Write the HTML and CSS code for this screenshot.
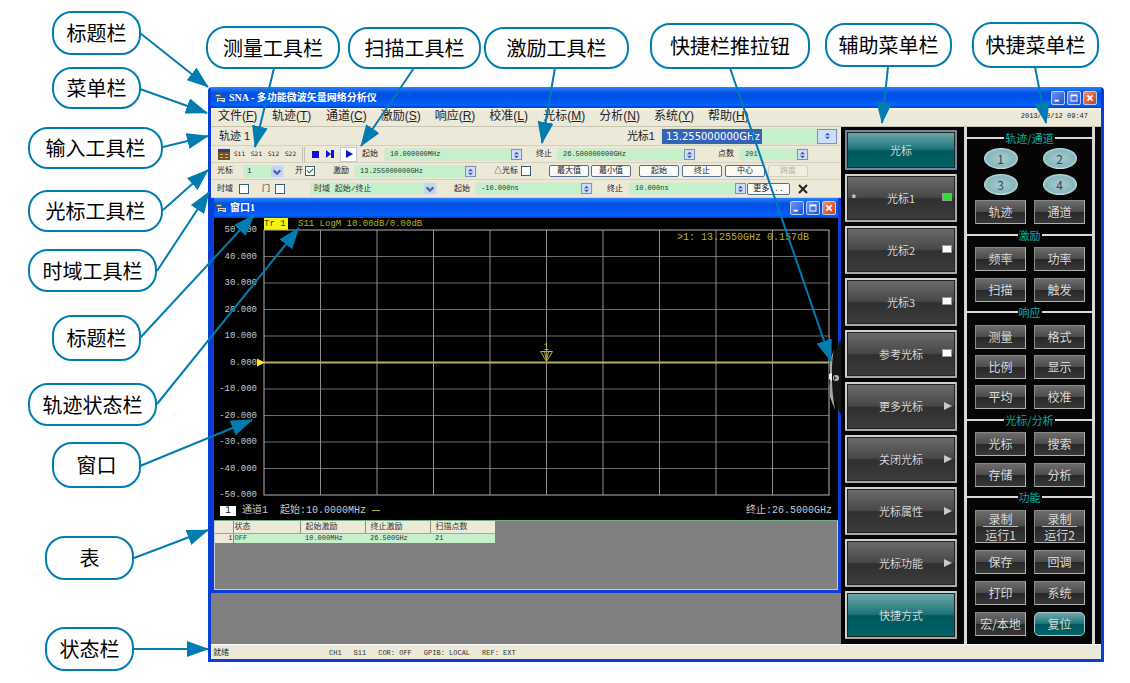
FILE: index.html
```html
<!DOCTYPE html>
<html lang="zh-CN">
<head>
<meta charset="utf-8">
<title>SNA - 多功能微波矢量网络分析仪</title>
<link rel="stylesheet" href="styles.css">
</head>
<body>
<svg class="defs" width="0" height="0" aria-hidden="true">
  <defs>
    <symbol id="app-icon" viewBox="0 0 10 10"><path d="M0 1h6v3H0z" fill="#5a6a5a"/><path d="M1 2h4v1H1z" fill="#d8e0b0"/><path d="M2 5h8v4H2z" fill="#d8d4b8"/><path d="M3 6h6v1H3zM3 8h4v1H3z" fill="#556"/></symbol>
    <symbol id="min" viewBox="0 0 14 14"><path d="M3 9h5v2H3z" fill="#fff"/></symbol>
    <symbol id="max" viewBox="0 0 14 14"><path d="M3 3h8v8H3zM4 5v5h6V5z" fill="#fff" fill-rule="evenodd"/></symbol>
    <symbol id="close" viewBox="0 0 14 14"><path d="M4 4l6 6M10 4l-6 6" stroke="#fff" stroke-width="2"/></symbol>
    <symbol id="spin" viewBox="0 0 10 12"><path d="M5 2L8 5H2zM5 10L2 7h6z" fill="#3c5aa8"/></symbol>
    <symbol id="drop" viewBox="0 0 10 10"><path d="M2 4l3 3 3-3" fill="none" stroke="#4c6490" stroke-width="2"/></symbol>
  </defs>
</svg>
<main class="figure">
  <section class="app">
    <header class="titlebar">
      <svg class="ticon"><use href="#app-icon"/></svg>
      <h1>SNA - 多功能微波矢量网络分析仪</h1>
      <div class="winbtns">
        <button aria-label="最小化"><svg><use href="#min"/></svg></button><button aria-label="最大化"><svg><use href="#max"/></svg></button><button class="x" aria-label="关闭"><svg><use href="#close"/></svg></button>
      </div>
    </header>
    <nav class="menubar">
      <button>文件(<u>F</u>)</button><button>轨迹(<u>T</u>)</button><button>通道(<u>C</u>)</button><button>激励(<u>S</u>)</button><button>响应(<u>R</u>)</button><button>校准(<u>L</u>)</button><button>光标(<u>M</u>)</button><button>分析(<u>N</u>)</button><button>系统(<u>Y</u>)</button><button>帮助(<u>H</u>)</button>
      <time>2013/10/12 09:47</time>
    </nav>
    <div class="content">
      <div class="left">
        <div class="row entry">
          <span class="trace-name">轨迹 1</span>
          <label for="entry">光标1</label>
          <span class="field big"><input id="entry" value="13.255000000GHz"><button class="spin" aria-label="调节"><svg><use href="#spin"/></svg></button></span>
        </div>
        <div class="row tools sweep">
          <button class="bare" aria-label="测量设置"><svg width="12" height="11" viewBox="0 0 12 11"><path d="M0 0h12v11H0z" fill="#70502c"/><path d="M0 0h12v3H0z" fill="#28407c"/><path d="M2 5h3v1H2zM7 5h3v1H7zM2 8h3v1H2zM7 8h3v1H7z" fill="#e8b840"/></svg></button>
          <button class="bare sp">S11</button><button class="bare sp">S21</button><button class="bare sp">S12</button><button class="bare sp">S22</button>
          <span class="grip"></span>
          <button class="bare" aria-label="停止"><svg width="14" height="12" viewBox="0 0 14 12"><path d="M3 3h7v7H3z" fill="#1010d8"/></svg></button>
          <button class="bare" aria-label="单次"><svg width="14" height="12" viewBox="0 0 14 12"><path d="M3 2l5 4V2h3v8H8V6l-5 4z" fill="#1010d8"/></svg></button>
          <button class="bare play" aria-label="连续"><svg width="14" height="12" viewBox="0 0 14 12"><path d="M4 2l7 4-7 4z" fill="#1010d8"/></svg></button>
          <label for="s1">起始</label>
          <span class="field w139"><input id="s1" value="10.000000MHz"><button class="spin" aria-label="调节"><svg><use href="#spin"/></svg></button></span>
          <label for="s2">终止</label>
          <span class="field w139"><input id="s2" value="26.500000000GHz"><button class="spin" aria-label="调节"><svg><use href="#spin"/></svg></button></span>
          <label for="s3">点数</label>
          <span class="field w70"><input id="s3" value="201"><button class="spin" aria-label="调节"><svg><use href="#spin"/></svg></button></span>
        </div>
        <div class="row tools cursor">
          <label for="c1">光标</label>
          <span class="field w41"><select id="c1"><option>1</option></select><svg class="drop"><use href="#drop"/></svg></span>
          <label for="c2">开</label><input type="checkbox" id="c2" checked>
          <label for="c3">激励</label>
          <span class="field w123"><input id="c3" value="13.255000000GHz"><button class="spin" aria-label="调节"><svg><use href="#spin"/></svg></button></span>
          <label for="c4">△光标</label><input type="checkbox" id="c4">
          <button class="xp">最大值</button><button class="xp">最小值</button><button class="xp">起始</button><button class="xp">终止</button><button class="xp">中心</button><button class="xp" disabled>跨度</button>
        </div>
        <div class="row tools domain">
          <label for="d1">时域</label><input type="checkbox" id="d1">
          <label for="d2">门</label><input type="checkbox" id="d2">
          <span class="field w127"><select id="d3" aria-label="时域方式"><option>时域 起始/终止</option></select><svg class="drop"><use href="#drop"/></svg></span>
          <label for="d4">起始</label>
          <span class="field w118"><input id="d4" value="-10.000ns"><button class="spin" aria-label="调节"><svg><use href="#spin"/></svg></button></span>
          <label for="d5">终止</label>
          <span class="field w118"><input id="d5" value="10.000ns"><button class="spin" aria-label="调节"><svg><use href="#spin"/></svg></button></span>
          <button class="xp more">更多...</button>
          <button class="bare" aria-label="关闭工具栏"><svg width="14" height="12" viewBox="0 0 14 12"><path d="M3 2l8 8M11 2l-8 8" stroke="#222" stroke-width="2"/></svg></button>
        </div>
        <section class="child">
          <header class="titlebar sub">
            <svg class="ticon"><use href="#app-icon"/></svg>
            <h2>窗口1</h2>
            <div class="winbtns">
              <button aria-label="最小化"><svg><use href="#min"/></svg></button><button aria-label="最大化"><svg><use href="#max"/></svg></button><button class="x" aria-label="关闭"><svg><use href="#close"/></svg></button>
            </div>
          </header>
          <div class="plot">
            <div class="trace"><span class="tag">Tr 1</span><span>S11 LogM 10.00dB/0.00dB</span></div>
            <div class="graph">
              <div class="axis"><span>50.000</span><span>40.000</span><span>30.000</span><span>20.000</span><span>10.000</span><span>0.000</span><span>-10.000</span><span>-20.000</span><span>-30.000</span><span>-40.000</span><span>-50.000</span></div>
              <div class="chart">
                <svg class="grid" width="100%" height="100%">
                  <g stroke="#6c6c6c">
                    <line x1="0" x2="100%" y1="10%" y2="10%"/><line x1="0" x2="100%" y1="20%" y2="20%"/><line x1="0" x2="100%" y1="30%" y2="30%"/><line x1="0" x2="100%" y1="40%" y2="40%"/><line x1="0" x2="100%" y1="60%" y2="60%"/><line x1="0" x2="100%" y1="70%" y2="70%"/><line x1="0" x2="100%" y1="80%" y2="80%"/><line x1="0" x2="100%" y1="90%" y2="90%"/>
                  </g>
                  <g stroke="#8c8c8c">
                    <line y1="0" y2="100%" x1="10%" x2="10%"/><line y1="0" y2="100%" x1="20%" x2="20%"/><line y1="0" y2="100%" x1="30%" x2="30%"/><line y1="0" y2="100%" x1="40%" x2="40%"/><line y1="0" y2="100%" x1="50%" x2="50%"/><line y1="0" y2="100%" x1="60%" x2="60%"/><line y1="0" y2="100%" x1="70%" x2="70%"/><line y1="0" y2="100%" x1="80%" x2="80%"/><line y1="0" y2="100%" x1="90%" x2="90%"/>
                  </g>
                  <rect width="100%" height="100%" fill="none" stroke="#b4b4b4"/>
                  <line x1="0" x2="100%" y1="50%" y2="50%" stroke="#b4b060" stroke-width="2"/>
                  <svg x="0" y="50%" overflow="visible"><path d="M-7-4L1 0l-8 4z" fill="#f0f020"/></svg>
                  <svg x="50%" y="50%" overflow="visible"><path d="M-6-11H6L0-1zM-2-11L0-2l2-9M0-13v-6l-2 1M-2-13h4" fill="none" stroke="#b8b820"/></svg>
                </svg>
                <p class="readout">&gt;1: 13.2550GHz 0.157dB</p>
              </div>
            </div>
            <div class="foot"><span class="num">1</span><span>通道1</span><span>起始:10.0000MHz</span><i></i><span class="stop">终止:26.5000GHz</span></div>
          </div>
          <div class="tablearea">
            <table>
              <thead><tr><th></th><th>状态</th><th>起始激励</th><th>终止激励</th><th>扫描点数</th></tr></thead>
              <tbody><tr><th>1</th><td>OFF</td><td>10.000MHz</td><td>26.500GHz</td><td>21</td></tr></tbody>
            </table>
          </div>
        </section>
        <button class="pull" aria-label="快捷栏推拉钮"><svg width="12" height="76" viewBox="0 0 12 76"><path d="M12 0C5 14 0 26 0 38s5 24 12 38z" fill="#151515"/><path d="M5 10L1 22v36l5 13c-2-14-3-20-3-33S3 22 5 10z" fill="#aaa6a2"/><path d="M0 35l3-1v8l-3-2z" fill="#eee"/><circle cx="7" cy="39" r="3" fill="#bbb"/><path d="M5 37l3 2-3 2z" fill="#333"/></svg></button>
      </div>
      <aside class="soft">
        <button class="teal head">光标</button>
        <button><b>*</b>光标1<i class="led on"></i></button>
        <button>光标2<i class="led"></i></button>
        <button>光标3<i class="led"></i></button>
        <button>参考光标<i class="led"></i></button>
        <button>更多光标<i class="arr"></i></button>
        <button>关闭光标<i class="arr"></i></button>
        <button>光标属性<i class="arr"></i></button>
        <button>光标功能<i class="arr"></i></button>
        <button class="teal">快捷方式</button>
      </aside>
      <aside class="short">
        <section class="g1"><h3>轨迹/通道</h3><div><button class="oval">1</button><button class="oval">2</button><button class="oval">3</button><button class="oval">4</button><button>轨迹</button><button>通道</button></div></section>
        <section class="g2"><h3>激励</h3><div><button>频率</button><button>功率</button><button>扫描</button><button>触发</button></div></section>
        <section class="g3"><h3>响应</h3><div><button>测量</button><button>格式</button><button>比例</button><button>显示</button><button>平均</button><button>校准</button></div></section>
        <section class="g4"><h3>光标/分析</h3><div><button>光标</button><button>搜索</button><button>存储</button><button>分析</button></div></section>
        <section class="g5"><h3>功能</h3><div><button class="two"><span>录制</span><span>运行1</span></button><button class="two"><span>录制</span><span>运行2</span></button><button>保存</button><button>回调</button><button>打印</button><button>系统</button><button>宏/本地</button><button class="teal reset">复位</button></div></section>
      </aside>
    </div>
    <footer class="status"><span class="ready">就绪</span><span>CH1</span><span>S11</span><span>COR: OFF</span><span>GPIB: LOCAL</span><span>REF: EXT</span></footer>
  </section>

  <svg class="arrows" width="1130" height="683" viewBox="0 0 1130 683" aria-hidden="true">
    <defs><marker id="tip" markerUnits="userSpaceOnUse" markerWidth="22" markerHeight="16" refX="21" refY="8" orient="auto"><path d="M0 0l22 8-22 8z" fill="#007cb0"/></marker></defs>
    <g stroke="#007cb0" stroke-width="2" marker-end="url(#tip)">
      <path d="M140 33L208 87"/><path d="M140 89L207 113"/><path d="M163 147L208 136"/><path d="M163 210L208 170"/><path d="M157 271L209 192"/><path d="M140 338L254 215"/><path d="M157 404L299 228"/><path d="M140 466L252 420"/><path d="M134 558L208 530"/><path d="M134 649L208 649"/><path d="M274 68L255 147"/><path d="M414 68L361 146"/><path d="M555 68L542 143"/><path d="M730 68L831 361"/><path d="M888 67L882 123"/><path d="M1035 67L1046 123"/>
    </g>
  </svg>
  <span class="note n1">标题栏</span>
  <span class="note n2">菜单栏</span>
  <span class="note n3">输入工具栏</span>
  <span class="note n4">光标工具栏</span>
  <span class="note n5">时域工具栏</span>
  <span class="note n6">标题栏</span>
  <span class="note n7">轨迹状态栏</span>
  <span class="note n8">窗口</span>
  <span class="note n9">表</span>
  <span class="note n10">状态栏</span>
  <span class="note n11">测量工具栏</span>
  <span class="note n12">扫描工具栏</span>
  <span class="note n13">激励工具栏</span>
  <span class="note n14">快捷栏推拉钮</span>
  <span class="note n15">辅助菜单栏</span>
  <span class="note n16">快捷菜单栏</span>
</main>
</body>
</html>
```

FILE: styles.css
```css
* { box-sizing: border-box; }
body { margin: 0; background: #fff; font-family: "Liberation Sans", "Noto Sans CJK SC", sans-serif; }
h1, h2, h3, p { margin: 0; font-weight: normal; }
button, input, select { font: inherit; color: inherit; margin: 0; padding: 0; border: 0; background: none; border-radius: 0; }
button { white-space: nowrap; }
svg { display: block; }
.defs { position: absolute; }

.figure { position: relative; min-width: 1130px; padding: 87px 26px 21px 208px; }

/* main window */
.app { display: flex; flex-direction: column; min-height: 575px; border: solid #0a3fd6; border-width: 0 3px 3px; border-radius: 4px 4px 0 0; background: #ece9d8; overflow: hidden; }
.titlebar { display: flex; align-items: center; gap: 4px; height: 21px; padding: 0 4px; background: linear-gradient(#2a84f8, #0050e4 30%, #0055ee 60%, #0462ff 85%, #0040c8); color: #fff; }
.titlebar h1, .titlebar h2 { flex: 1; font: bold 10px/14px "Liberation Serif", "Noto Sans CJK SC", serif; }
.ticon { width: 10px; height: 10px; }
.winbtns { display: flex; gap: 2px; }
.winbtns button { width: 14px; height: 14px; border: 1px solid #b8ccf8; border-radius: 2px; background: linear-gradient(135deg, #6c98f4, #2450d8); }
.winbtns .x { background: linear-gradient(135deg, #f09070, #d03c18); }
.winbtns svg { width: 12px; height: 12px; }

.menubar { display: flex; align-items: center; gap: 14px; flex: none; height: 19px; padding: 0 13px 2px 7px; border-bottom: 1px solid #c8c4b4; background: linear-gradient(#f8f8f4, #ece9d8 20%); color: #222; font: 12px/16px "DejaVu Sans", "Noto Sans CJK SC", sans-serif; }
.menubar button { font: 12px/16px "Liberation Sans", "Noto Sans CJK SC", sans-serif; min-width: 40px; text-align: left; }
.menubar time { margin-left: auto; font: 7px/10px "Liberation Mono", monospace; }

.content { display: flex; flex: 1; background: #050505; }
.left { position: relative; display: flex; flex-direction: column; flex: 1; min-width: 0; background: #808080; }

/* toolbars */
.row { flex: none; height: 17px; padding-left: 6px; align-items: center; border-bottom: 1px solid #d4d0c0; background: #ece9d8; color: #222; }
.entry { display: flex; height: 19px; padding: 0 3px 0 8px; font: 11px/16px "Liberation Sans", "Noto Sans CJK SC", sans-serif; }
.trace-name { flex: 1; }
.entry label { margin-right: 5px; }
.tools { display: grid; font: 8px/12px "Liberation Mono", "Noto Sans CJK SC", monospace; }
.sweep { grid-template-columns: 13px 17px 17px 17px 20px 7px 14px 17px 22px 22px 152px 21px 161px 21px 1fr; padding-left: 7px; }
.cursor { grid-template-columns: 26px 52px 10px 28px 21px 140px 27px 28px 42px 48px 43px 43px 43px 1fr; }
.domain { grid-template-columns: 22px 23px 13px 35px 144px 21px 132px 22px 118px 49px 1fr; height: 18px; }
.row label { white-space: nowrap; }
.bare { display: grid; place-items: center; justify-self: start; }
.sp { width: 17px; font: 6px/12px "DejaVu Sans", sans-serif; }
.grip { width: 3px; height: 15px; border: solid #c4c0b0; border-width: 0 1px; }
.play { height: 15px; width: 17px; border: 1px solid #c0c8e0; background: #fff; }
.field { display: flex; height: 13px; border: 1px solid #dfe6cf; background: #c4f0cc; color: #333; font: 7px/11px "Liberation Mono", monospace; }
.field input, .field select { flex: 1; min-width: 0; padding-left: 5px; appearance: none; outline: 0; }
.field select { padding-left: 3px; font: 8px/10px "Liberation Mono", "Noto Sans CJK SC", monospace; }
.spin { display: grid; place-items: center; width: 11px; border: 1px solid #8090b8; background: #d0dcfc; }
.spin svg { width: 9px; height: 10px; }
.drop { width: 12px; height: 11px; background: #c4d4f8; }
.big { width: 178px; height: 17px; font: 10px/15px "DejaVu Sans", sans-serif; }
.big input { flex: none; width: 101px; padding-left: 4px; border: solid #c4f0cc; border-width: 0 0 0 1px; background: #3464b8; color: #fff; }
.big .spin { width: 20px; margin-left: auto; }
.w139 { width: 139px; } .w70 { width: 70px; } .w41 { width: 41px; } .w123 { width: 123px; } .w127 { width: 127px; } .w118 { width: 118px; }
input[type="checkbox"] { appearance: none; width: 10px; height: 10px; border: 1px solid #3c5c80; background: #fff; }
input[type="checkbox"]:checked::after { content: ""; display: block; width: 5px; height: 3px; margin: 1px; border: solid #228822; border-width: 0 0 1px 1px; transform: rotate(-45deg); }
.xp { width: 40px; height: 12px; border: 1px solid #56708c; border-radius: 2px; background: #fafaf6; line-height: 10px; }
.xp:disabled { border-color: #d4d0c0; color: #b8b4a4; background: #f0eee2; }
.more { width: 43px; }

/* child window */
.child { display: flex; flex-direction: column; min-height: 395px; margin-bottom: 51px; border: solid #0a3fd6; border-width: 0 3px 3px; }
.sub { flex: none; height: 20px; padding: 0 2px; }
.plot { flex: none; display: flex; flex-direction: column; height: 303px; background: #000; border-bottom: 1px solid #70b080; color: #c8c8c8; font: 9px/12px "Liberation Mono", "Noto Sans CJK SC", monospace; }
.trace { display: flex; gap: 10px; height: 12px; padding-left: 50px; color: #b4b420; }
.tag { width: 24px; background: #f4f410; color: #444400; }
.graph { display: grid; grid-template-columns: 43px 1fr; column-gap: 7px; height: 265px; padding-right: 9px; }
.axis { display: flex; flex-direction: column; justify-content: space-between; margin: -6px 0; text-align: right; }
.chart { position: relative; }
.grid { overflow: visible; }
.readout { position: absolute; top: 2px; right: 20px; color: #b4b420; font-size: 10px; }
.foot { display: flex; align-items: center; flex: 1; gap: 6px; padding: 6px 6px 0; font-size: 10px; }
.foot .num { width: 16px; height: 10px; background: #fff; color: #222; line-height: 10px; text-align: center; }
.foot span + span + span { margin-left: 6px; }
.foot i { width: 8px; height: 1px; background: #b4b420; }
.foot .stop { margin-left: auto !important; }
.tablearea { flex: 1; background: #808080; border: solid #c8ccd8; border-width: 0 1px 1px; }
table { width: 279px; table-layout: fixed; border-collapse: collapse; color: #333; font: 7px/9px "Liberation Mono", "Noto Sans CJK SC", monospace; }
thead th { height: 12px; padding: 0 0 0 5px; background: #ece9d8; border-bottom: 1px solid #a8a494; font-weight: normal; font-size: 8px; text-align: left; }
thead th + th { border-left: 1px solid #908c7c; }
thead th:nth-child(1) { width: 18px; } thead th:nth-child(2) { width: 67px; } thead th:nth-child(n+3) { width: 65px; }
thead th:nth-child(2), td:nth-child(2) { padding-left: 1px; }
tbody th { height: 10px; padding: 0; background: #ece9d8; font-weight: normal; text-align: right; border-right: 1px solid #908c7c; }
td { padding: 0 0 0 5px; background: #c4f0cc; }
.pull { position: absolute; right: 0; top: 212px; }

/* soft keys */
.soft { display: flex; flex-direction: column; gap: 4px; flex: none; width: 121px; padding: 3px 7px 5px 2px; margin-left: 2px; }
.soft button { position: relative; flex: 1; border: 2px solid; border-color: #d0d0d0 #a8a8a8 #a8a8a8 #d0d0d0; border-radius: 1px; background: linear-gradient(#6c6c6c, #484848 48%, #303030 52%, #3c3c3c); box-shadow: inset 0 0 0 1px #222; color: #d4d4d4; font: 11px/16px "Noto Sans CJK SC", sans-serif; }
.soft .head { flex: none; height: 40px; border-color: #789; }
.soft .teal, .short .teal { background: linear-gradient(#70a8ac, #1c7478 48%, #00585c 52%, #006468); }
.soft b { position: absolute; left: 4px; top: 14px; font-size: 11px; }
.led { position: absolute; right: 3px; top: 17px; width: 10px; height: 8px; background: #fff; border: 1px solid #999; }
.led.on { background: #30e030; }
.arr { position: absolute; right: 3px; top: 18px; border: solid transparent; border-width: 4px 0 4px 8px; border-left-color: #c8c8c8; }

/* shortcut keys */
.short { display: flex; flex-direction: column; flex: none; width: 131px; margin-right: 6px; padding-top: 4px; border: solid #d8d8d8; border-width: 0 3px 0 3px; }
.short h3 { display: flex; align-items: center; gap: 1px; height: 14px; color: #00b0a8; font: 11px/14px "Noto Sans CJK SC", sans-serif; }
.short h3::before, .short h3::after { content: ""; flex: 1; height: 2px; background: #d8d8d8; }
.short section > div { display: grid; grid-template-columns: 1fr 1fr; gap: 7px 8px; padding: 6px 7px 0 8px; }
.short button { height: 24px; border: 1px solid; border-color: #888 #b0b0b0 #b0b0b0 #888; background: linear-gradient(#6c6c6c, #4c4c4c 48%, #282828 52%, #383838); color: #d8d8d8; font: 12px/18px "Noto Sans CJK SC", sans-serif; }
.short .g1 { height: 97px; } .short .g2 { height: 77px; } .short .g3 { height: 108px; } .short .g4 { height: 77px; }
.short .g1 > div { row-gap: 5px; padding-top: 3px; }
.short .g2 > div, .short .g4 > div { padding-top: 5px; }
.short .g3 > div { row-gap: 6px; }
.short .oval { justify-self: center; width: 34px; height: 21px; border: 1px solid #c0dcdc; border-radius: 50%; background: radial-gradient(#a8ccd0, #88b8bc 60%, #d0e8e8); color: #345; line-height: 17px; }
.short .two { display: flex; flex-direction: column; align-items: center; height: 33px; line-height: 15px; }
.short .two span + span { border-top: 1px solid #bbb; padding: 0 2px; }
.short .reset { border-radius: 5px; border-color: #a0c8cc; }

.status { display: flex; flex: none; gap: 12px; height: 15px; padding: 2px 2px 0; border-top: 1px solid #fff; color: #333; font: 7px/12px "Liberation Mono", "Noto Sans CJK SC", monospace; }
.ready { width: 104px; font-size: 8px; }

/* callouts */
.arrows { position: absolute; left: 0; top: 0; pointer-events: none; }
.note { position: absolute; display: grid; place-items: center; width: 89px; height: 44px; border: 2px solid #007cb0; border-radius: 20px; background: #fff; color: #000; font: 20px/24px "Noto Sans CJK SC", sans-serif; white-space: nowrap; }
.n1 { left: 52px; top: 11px; }
.n2 { left: 52px; top: 67px; height: 42px; }
.n3 { left: 28px; top: 127px; width: 135px; height: 42px; }
.n4 { left: 28px; top: 190px; width: 135px; height: 42px; }
.n5 { left: 28px; top: 249px; width: 129px; height: 43px; }
.n6 { left: 52px; top: 315px; height: 46px; }
.n7 { left: 28px; top: 383px; width: 129px; height: 43px; }
.n8 { left: 52px; top: 442px; height: 46px; }
.n9 { left: 45px; top: 536px; }
.n10 { left: 45px; top: 627px; }
.n11 { left: 206px; top: 26px; width: 134px; height: 43px; }
.n12 { left: 348px; top: 27px; width: 133px; height: 42px; }
.n13 { left: 484px; top: 27px; width: 145px; height: 42px; }
.n14 { left: 650px; top: 23px; width: 160px; height: 46px; }
.n15 { left: 825px; top: 23px; width: 127px; }
.n16 { left: 972px; top: 22px; width: 127px; height: 46px; }
```
